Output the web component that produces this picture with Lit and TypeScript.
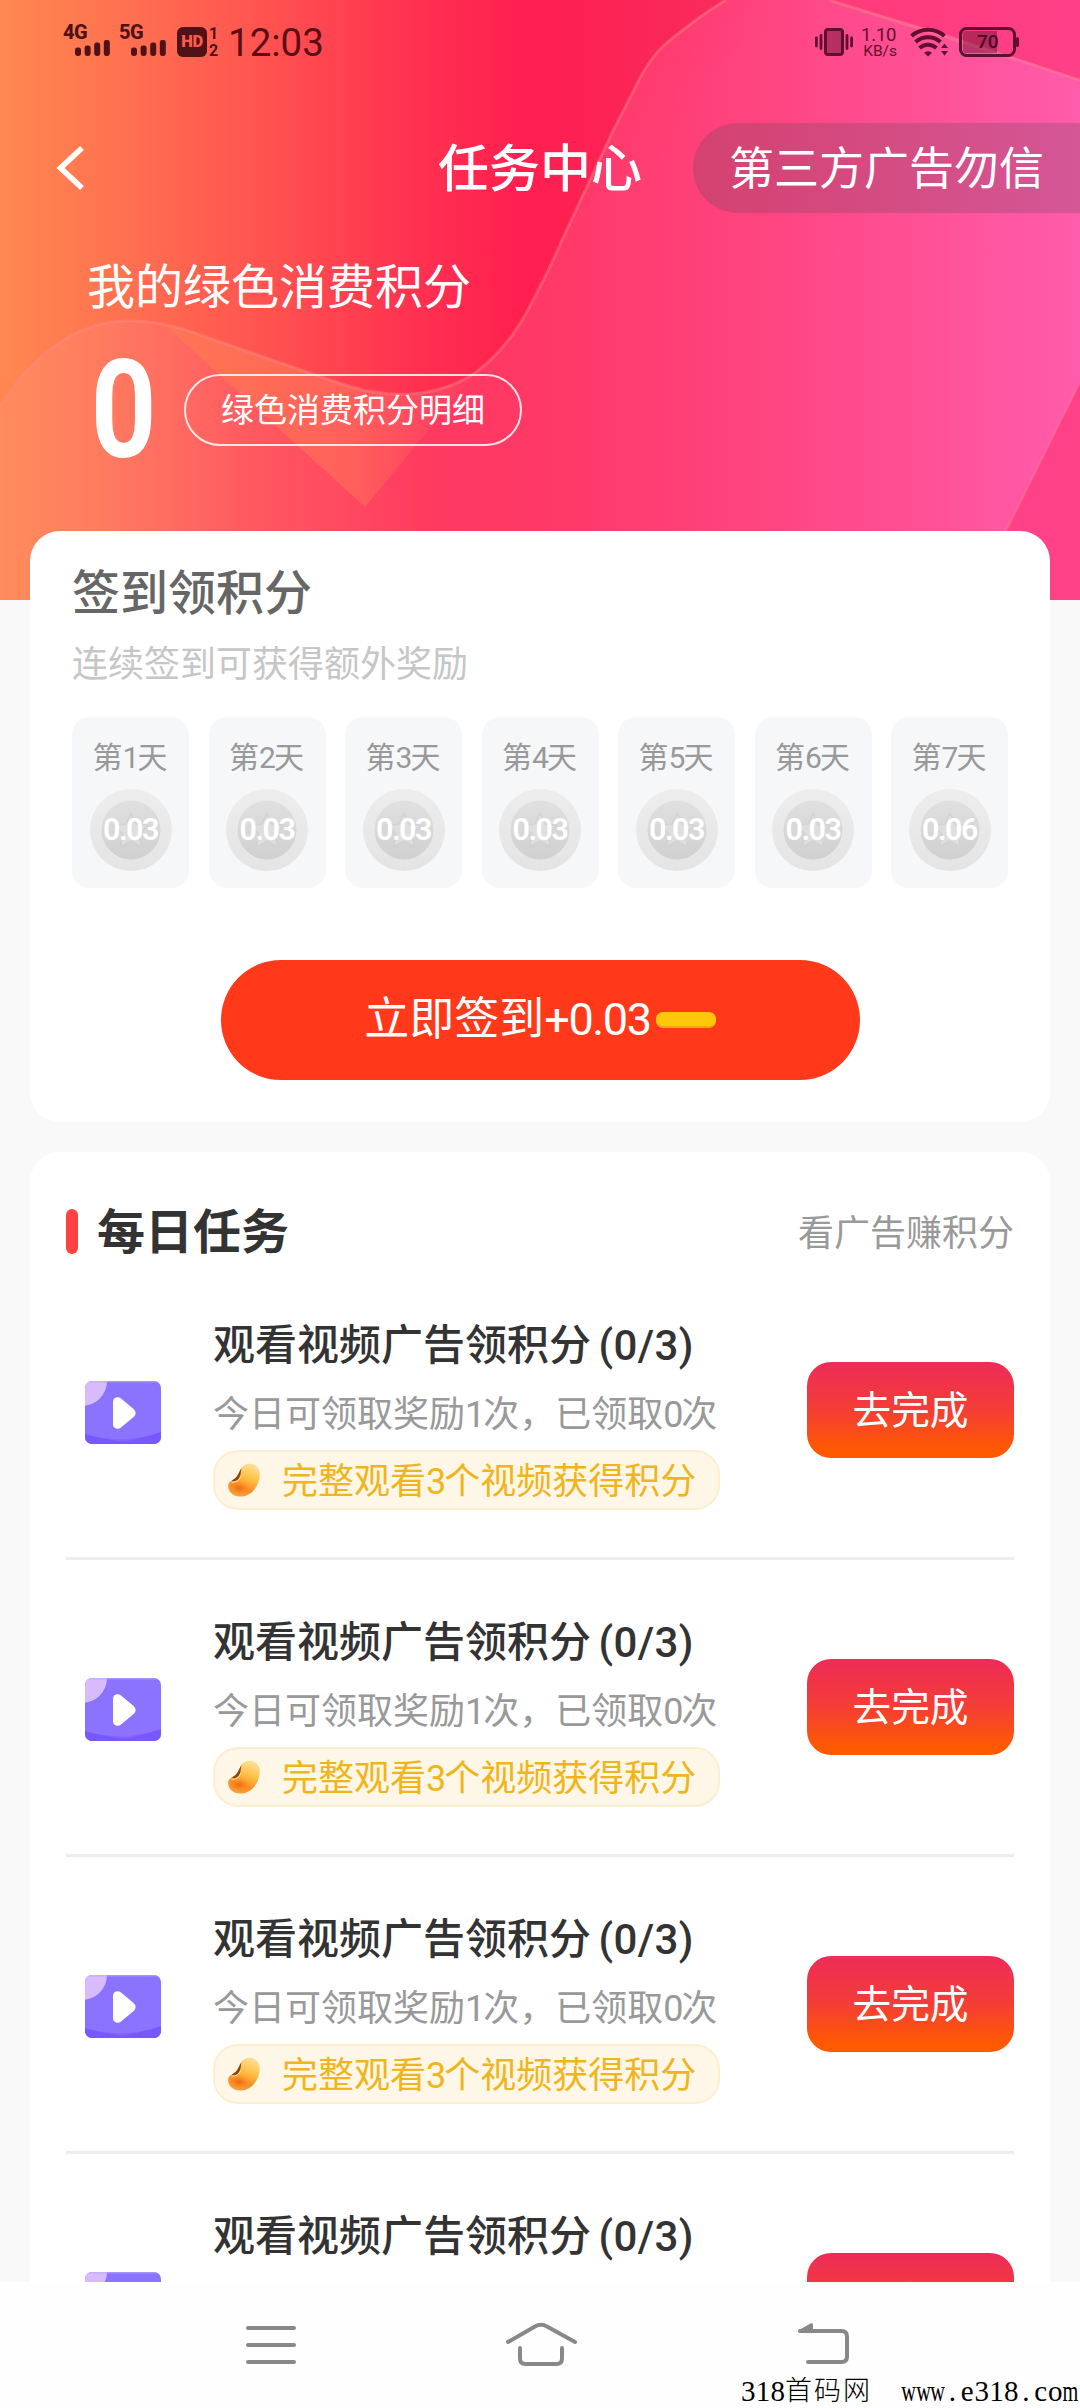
import { LitElement, html, css, svg } from "lit";
import { customElement, property } from "lit/decorators.js";

/** Wraps latin digits in a slightly tightened run so they sit well beside CJK text. */
const mixed = (text: string) =>
  text.split(/([0-9+.()/]+)/).map((part, i) => (i % 2 ? html`<span class="num">${part}</span>` : part));

const shared = css`
  * { box-sizing: border-box; }
  .num { letter-spacing: -0.058em; }
  svg { display: block; overflow: visible; }
`;

@customElement("status-bar")
class StatusBar extends LitElement {
  static styles = [shared, css`
    :host { display: flex; justify-content: space-between; align-items: center; height: 84px; padding: 0 60px 0 63px; color: #4f1217; position: relative; }
    .left, .right { display: flex; align-items: center; }
    .signal { display: flex; flex-direction: column; width: 48px; height: 44px; margin-right: 8px; font-size: 20px; line-height: 24px; font-weight: 800; letter-spacing: -0.6px; white-space: nowrap; }
    .bars { margin: -7px 0 0 12px; }
    .hd { display: flex; align-items: center; width: 44px; height: 36px; margin-left: 2px; }
    .badge { width: 30px; height: 30px; border-radius: 6px; background: currentColor; display: flex; align-items: center; justify-content: center; }
    .badge span { color: #ff5a50; font-size: 16.5px; line-height: 22px; font-weight: 900; letter-spacing: -0.5px; }
    .sims { display: flex; flex-direction: column; align-items: center; margin-left: 2px; font-size: 16px; line-height: 17px; font-weight: 700; }
    .clock { font-size: 38.5px; line-height: 46px; margin-left: 7px; margin-top: 2px; letter-spacing: 0; color: #5a0f16; }
    .speed { width: 36px; margin: 0 13px 0 8px; }
    .speed .value { display: block; font-size: 18.5px; line-height: 20px; letter-spacing: -0.2px; }
    .speed .unit { display: block; font-size: 15.5px; line-height: 17px; text-align: right; margin-top: -2px; }
    .right { color: #60102f; }
    .battery { display: grid; margin-left: 11px; width: 61px; height: 32px; }
    .battery > * { grid-area: 1 / 1; }
    .battery .level { font-size: 19px; font-weight: 500; line-height: 32px; padding-left: 18px; color: #4a0c28; }
  `];

  private signal(label: string) {
    return html`<div class="signal"><span>${label}</span>
      <svg class="bars" width="36" height="21" viewBox="0 0 36 21">
        ${[8.5, 10.5, 13.5, 16].map((h, i) => svg`<rect x=${i * 9.6} y=${19 - h} width="6" height=${h} rx="2.4" fill="currentColor"/>`)}
      </svg></div>`;
  }

  render() {
    return html`
      <div class="left">
        ${this.signal("4G")}${this.signal("5G")}
        <div class="hd">
          <div class="badge"><span>HD</span></div>
          <div class="sims"><span>1</span><span>2</span></div>
        </div>
        <span class="clock">12:03</span>
      </div>
      <div class="right">
        <svg width="38" height="32" viewBox="0 0 38 32">
          <rect x="10.5" y="3.5" width="17" height="25" rx="2.5" fill="#60102f" fill-opacity=".45" stroke="currentColor" stroke-width="3"/>
          <path d="M1.4 12v8M6 9.500v13M32 9.500v13M36.600 12v8" stroke="currentColor" stroke-width="2.8" stroke-linecap="round"/>
        </svg>
        <div class="speed"><span class="value">1.10</span><span class="unit">KB/s</span></div>
        <svg width="38" height="32" viewBox="0 0 38 32">
          <g fill="none" stroke="currentColor" stroke-width="4">
            <path d="M1.500 10a25 25 0 0 1 33 0"/>
            <path d="M5.500 16a18.500 18.500 0 0 1 25 0"/>
            <path d="M9.500 22a12.500 12.500 0 0 1 17 0"/>
          </g>
          <path d="M14 26.700q4-3 8 0L18 30.500z" fill="currentColor"/>
          <path d="M31 22l3.500-4.500L38 22zM31 25h7l-3.500 4.800z" fill="currentColor"/>
        </svg>
        <div class="battery">
          <svg width="61" height="32" viewBox="0 0 61 32">
            <rect x="1.500" y="2.500" width="54" height="27" rx="6" fill="none" stroke="currentColor" stroke-width="3"/>
            <path d="M7 5h31v22H7a3 3 0 0 1-3-3V8a3 3 0 0 1 3-3z" fill="currentColor" fill-opacity=".45"/>
            <path d="M58.500 12.500v7" stroke="currentColor" stroke-width="3" stroke-linecap="round"/>
          </svg>
          <span class="level">70</span>
        </div>
      </div>`;
  }
}

@customElement("hero-art")
class HeroArt extends LitElement {
  static styles = [shared, css`:host { display: block; } svg { overflow: hidden; }`];
  render() {
    const wave = "M0 406C40 345 85 321 128 321C155 321 180 327 203 336L275 361L345 385C395 401 440 396 475 373C498 356 515 335 530 306C546 276 552 264 562 240L612 133L640 78C652 56 662 46 674 37C690 24 706 12 726 0";
    return html`<svg width="1080" height="600" viewBox="0 0 1080 600">
      <defs>
        <linearGradient id="base" x1="0" x2="1">
          <stop offset="0" stop-color="#ff8850"/><stop offset=".1" stop-color="#ff7450"/>
          <stop offset=".24" stop-color="#ff5450"/><stop offset=".38" stop-color="#ff3250"/>
          <stop offset=".49" stop-color="#ff1e50"/><stop offset=".62" stop-color="#f92858"/><stop offset="1" stop-color="#ff3c85"/>
        </linearGradient>
        <linearGradient id="front" x1="0" x2="1">
          <stop offset="0" stop-color="#ff8c5c"/><stop offset=".1" stop-color="#ff7a60"/>
          <stop offset=".24" stop-color="#ff5860"/><stop offset=".4" stop-color="#ff3a60"/>
          <stop offset=".5" stop-color="#ff3866"/><stop offset=".7" stop-color="#ff4480"/>
          <stop offset="1" stop-color="#ff5cab"/>
        </linearGradient>
        <linearGradient id="corner" x1="0" x2="1">
          <stop offset="0" stop-color="#ff3a78"/><stop offset="1" stop-color="#ff4088"/>
        </linearGradient>
        <linearGradient id="shade" gradientUnits="userSpaceOnUse" x1="610" y1="90" x2="680" y2="145">
          <stop offset="0" stop-color="#ff3060" stop-opacity=".35"/><stop offset="1" stop-color="#ff3a6a" stop-opacity="0"/>
        </linearGradient>
        <linearGradient id="fold" gradientUnits="userSpaceOnUse" x1="165" y1="0" x2="475" y2="0">
          <stop offset="0" stop-color="#ff7850" stop-opacity=".85"/><stop offset=".6" stop-color="#ff6a58" stop-opacity=".7"/><stop offset="1" stop-color="#ff5060" stop-opacity=".15"/>
        </linearGradient>
      </defs>
      <rect width="1080" height="600" fill="url(#base)"/>
      <path d="${wave}H1080V600H0z" fill="url(#front)"/>
      <path d="M726 0L800 0L592 240L530 306C546 276 552 264 562 240L640 78C660 40 690 24 726 0z" fill="url(#shade)"/>
      <path d="M165 325C180 328 192 331 203 336L275 361L345 385C395 401 440 396 475 373L365 507z" fill="url(#fold)"/>
      <path d="M829 0H1080V80L940 32z" fill="url(#corner)"/>
      <path d="M1080 382L1004 535V600H1080z" fill="#ff4188"/>
      <g fill="none" stroke="#ff8c8c" stroke-opacity=".4" stroke-width="3">
        <path d="${wave}"/><path d="M829 0L940 35L1080 80"/><path d="M1080 382L1004 535" stroke-opacity=".25"/>
      </g>
    </svg>`;
  }
}

@customElement("day-card")
class DayCard extends LitElement {
  @property({ type: Number }) day = 1;
  @property() points = "";
  static styles = [shared, css`
    :host { display: flex; flex-direction: column; align-items: center; height: 171px; padding-top: 22px; border-radius: 18px; background: #f6f7f9; }
    .label { font-size: 30px; line-height: 38px; color: #999; margin-right: 1px; }
    .coin { display: grid; place-items: center; width: 82px; height: 82px; margin-top: 12px; }
    .coin > * { grid-area: 1 / 1; }
    .points { font-size: 30.5px; font-weight: 600; line-height: 38px; color: #fff; }
    .points .num { letter-spacing: -0.05em; }
  `];
  render() {
    return html`
      <span class="label">${mixed(`第${this.day}天`)}</span>
      <div class="coin">
        <svg width="82" height="82" viewBox="0 0 82 82">
          <defs>
            <linearGradient id="o" x2="0" y2="1"><stop stop-color="#ededed"/><stop offset="1" stop-color="#e4e4e4"/></linearGradient>
            <linearGradient id="i" x2="0" y2="1"><stop stop-color="#e0e0e0"/><stop offset="1" stop-color="#d0d0d0"/></linearGradient>
          </defs>
          <circle cx="41" cy="41" r="41" fill="url(#o)"/>
          <circle cx="41" cy="41" r="29.500" fill="url(#i)"/>
          <path d="M41 24l5 11 12 1.500-9 8.500 2.500 13L41 52l-10.500 6L33 45l-9-8.500L36 35z" fill="#dedede" stroke="#d2d2d2" stroke-width="1.500" stroke-linejoin="round"/>
        </svg>
        <span class="points">${mixed(this.points)}</span>
      </div>`;
  }
}

@customElement("task-row")
class TaskRow extends LitElement {
  @property() heading = "";
  @property() note = "";
  @property() reward = "";
  @property() action = "";
  static styles = [shared, css`
    :host { display: flex; height: 297px; padding: 60px 0 0 19px; border-bottom: 3px solid #ededed; }
    .thumb { width: 76px; height: 63px; margin-top: 58px; flex: none; overflow: hidden; }
    .body { margin-left: 52px; flex: 1; display: flex; flex-direction: column; align-items: flex-start; }
    .heading { font-size: 42px; line-height: 60px; font-weight: 500; color: #333; margin-top: -7px; white-space: pre; }
    .heading .num { letter-spacing: 0.01em; margin-left: -3px; }
    .note { font-size: 36px; line-height: 50px; color: #999; margin-top: 14px; white-space: nowrap; }
    .reward { display: flex; align-items: center; width: 507px; height: 60px; margin-top: 10px; padding-left: 12px; border: 2px solid #fdeed0; border-radius: 25px; background: #fef6e6; font-size: 36px; line-height: 56px; color: #f0b51c; white-space: nowrap; }
    .reward svg { margin-right: 21px; }
    .reward .words { margin-top: 3px; }
    .action { width: 207px; height: 96px; margin-top: 39px; flex: none; border-radius: 24px; background: linear-gradient(#ed2c58, #f43c38 48%, #ff5a00 92%); color: #fff; font-size: 38.7px; line-height: 96px; text-align: center; padding-top: 1px; }
  `];
  render() {
    return html`
      <svg class="thumb" viewBox="0 0 76 63">
        <defs><clipPath id="c"><rect width="76" height="63" rx="7"/></clipPath></defs>
        <g clip-path="url(#c)">
          <rect width="76" height="63" fill="#8b73ff"/>
          <path d="M0 53Q38 65 76 51V63H0z" fill="#7857ff"/>
          <path d="M19 57Q38 60 57 56Q38 64 19 57z" fill="#8b64ff"/>
          <circle cx="-3" cy="0" r="25" fill="#d7bbfc"/>
          <rect width="76" height="1.500" fill="#b9a9ff" opacity=".6"/>
        </g>
        <path d="M28 20.500C28 16.500 33 15 36 17.500L48 27.500C51.500 30.500 51.500 33.500 48 36.500L36 46.500C33 49 28 47.500 28 43.500z" fill="#fff"/>
      </svg>
      <div class="body">
        <span class="heading">${mixed(this.heading)}</span>
        <span class="note">${mixed(this.note)}</span>
        <div class="reward">
          <svg width="34" height="36" viewBox="0 0 34 36">
            <defs>
              <linearGradient id="b" x1=".7" y1="0" x2=".35" y2="1">
                <stop stop-color="#ffe098"/><stop offset=".4" stop-color="#ffc046"/><stop offset=".75" stop-color="#f98e24"/><stop offset="1" stop-color="#f5a23c"/>
              </linearGradient>
              <radialGradient id="g"><stop stop-color="#ee5f10" stop-opacity=".8"/><stop offset="1" stop-color="#f47a1a" stop-opacity="0"/></radialGradient>
            </defs>
            <path d="M14 6.500C18-.5 31 0 32.500 10C34 20 27 33 15 34.500C7 35.500 1 30 1.200 24C1.300 18.500 6 19 10 14.500C12.500 11.500 12.500 9 14 6.500z" fill="url(#b)"/>
            <ellipse cx="12" cy="26" rx="10" ry="7" fill="url(#g)"/>
            <path d="M14.500 6C12 9.500 11 13.500 8.500 16C7 17.500 5 18 4.500 19.500C8.500 20 12 17.500 13 14C14 11 13.800 9 14.500 6z" fill="#8c4510"/>
            <path d="M4.500 20C8.500 20.500 12.500 18.500 13.500 14.500" fill="none" stroke="#fff0c0" stroke-width="1"/>
          </svg>
          <span class="words">${mixed(this.reward)}</span>
        </div>
      </div>
      <div class="action">${this.action}</div>`;
  }
}

@customElement("app-root")
class AppRoot extends LitElement {
  static styles = [shared, css`
    :host { display: flex; flex-direction: column; position: relative; width: 1080px; height: 2408px; overflow: hidden; background: #f9f9f9; font-family: Roboto, "Noto Sans CJK SC", sans-serif; }
    .page { flex: 1; min-height: 0; overflow: hidden; position: relative; }
    .art { position: absolute; top: 0; left: 0; }
    .hero { position: relative; height: 531px; color: #fff; }
    .topbar { display: grid; grid-template-columns: 1fr auto 1fr; align-items: center; height: 168px; }
    .back { margin-left: 56px; }
    .title { font-size: 51px; font-weight: 500; line-height: 70px; margin-top: 3px; }
    .notice { justify-self: end; width: 387px; height: 90px; border-radius: 45px 0 0 45px; background: rgba(82, 72, 88, .25); font-size: 45px; line-height: 93px; padding-left: 36px; white-space: nowrap; }
    .balance-label { font-size: 48px; line-height: 72px; padding-left: 87px; }
    .balance { display: flex; align-items: center; height: 72px; margin-top: 50px; padding-left: 87px; }
    .zero { width: 74px; display: flex; justify-content: center; margin-right: 23px; font-size: 138px; font-weight: 700; line-height: 164px; }
    .zero span { transform: scaleX(.83); }
    .detail { width: 338px; height: 72px; border: 2px solid rgba(255, 255, 255, .85); border-radius: 36px; font-size: 33px; line-height: 70px; text-align: center; }
    .card { position: relative; width: 1020px; margin: 0 auto; background: #fff; border-radius: 30px; }
    .checkin { height: 591px; padding: 29px 42px 0; }
    .checkin h2 { margin: 0; font-size: 48px; font-weight: 500; line-height: 68px; color: #666; }
    .checkin p { margin: 10px 0 0; font-size: 36px; line-height: 54px; color: #c6c6c6; }
    .days { display: grid; grid-template-columns: repeat(7, 117px); justify-content: space-between; margin-top: 25px; }
    .sign { display: flex; align-items: center; justify-content: center; width: 639px; height: 120px; margin: 72px auto 0; border-radius: 60px; background: #ff391a; color: #fff; font-size: 45px; line-height: 60px; }
    .sign .num { letter-spacing: -0.03em; }
    .dash { width: 60px; height: 16px; margin-left: 5px; border-radius: 7px; background: #fdc80c; border-bottom: 2px solid #eda90c; }
    .tasks { margin-top: 30px; padding: 48px 36px 0; border-radius: 30px 30px 0 0; }
    .tasks-head { display: flex; align-items: center; height: 63px; }
    .mark { width: 12px; height: 45px; border-radius: 6px; background: #ff4242; }
    .tasks-head h2 { margin: 2px 0 0 19px; font-size: 48px; font-weight: 700; line-height: 62px; color: #333; flex: 1; }
    .tasks-head span { font-size: 36px; line-height: 50px; color: #999; margin-top: 4px; }
    .sysnav { flex: none; height: 126px; background: #fefefe; display: flex; align-items: flex-start; padding: 38px 0 0 244px; }
    .home { margin: 0 218px 0 206px; }
    .watermark { position: absolute; left: 741px; top: 2374px; display: flex; align-items: center; font-family: "Liberation Serif", "Noto Sans CJK SC", serif; font-size: 29px; line-height: 34px; color: #000; }
    .half { display: flex; justify-content: center; width: 14.700px; }
    .half.wide span { transform: scaleX(.7); }
    .full { width: 29px; font-size: 27px; font-weight: 300; }
  `];

  private days = ["0.03", "0.03", "0.03", "0.03", "0.03", "0.03", "0.06"];

  private cell(ch: string) {
    const full = ch.charCodeAt(0) > 255;
    return html`<span class=${full ? "full" : /[wm]/.test(ch) ? "half wide" : "half"}><span>${ch}</span></span>`;
  }

  render() {
    return html`
      <div class="page">
        <hero-art class="art"></hero-art>
        <div class="hero">
          <status-bar></status-bar>
          <div class="topbar">
            <svg class="back" width="30" height="46" viewBox="0 0 30 46"><path d="M26 3L4.500 23L26 43" fill="none" stroke="#fff" stroke-width="5.500"/></svg>
            <div class="title">任务中心</div>
            <div class="notice">第三方广告勿信</div>
          </div>
          <div class="balance-label">我的绿色消费积分</div>
          <div class="balance">
            <div class="zero"><span>0</span></div>
            <div class="detail">绿色消费积分明细</div>
          </div>
        </div>
        <section class="card checkin">
          <h2>签到领积分</h2>
          <p>连续签到可获得额外奖励</p>
          <div class="days">
            ${this.days.map((p, i) => html`<day-card .day=${i + 1} .points=${p}></day-card>`)}
          </div>
          <div class="sign"><span>${mixed("立即签到+0.03")}</span><i class="dash"></i></div>
        </section>
        <section class="card tasks">
          <div class="tasks-head"><i class="mark"></i><h2>每日任务</h2><span>看广告赚积分</span></div>
          ${[1, 2, 3].map(() => this.task())}
          ${this.task()}
        </section>
      </div>
      <nav class="sysnav">
        <svg width="54" height="48" viewBox="0 0 54 48"><path d="M4 8H50M4 25H50M4 42H50" stroke="#888" stroke-width="4" stroke-linecap="round"/></svg>
        <svg class="home" width="74" height="48" viewBox="0 0 74 48"><g fill="none" stroke="#888" stroke-width="4" stroke-linecap="round" stroke-linejoin="round"><path d="M4 22L31 6.500Q37 3 43 6.500L71 22"/><path d="M16 28V38.500Q16 44 21.500 44H52.500Q58 44 58 38.500V28"/></g></svg>
        <svg width="54" height="48" viewBox="0 0 54 48"><path d="M12 42H45.500Q51 42 51 36.500V16.500Q51 11 45.500 11H4" fill="none" stroke="#888" stroke-width="4" stroke-linecap="round"/><path d="M2 10.500L15.500 3Q17 3 17 5V12H3z" fill="#888"/></svg>
      </nav>
      <div class="watermark">${[..."318首码网　www.e318.com"].map((c) => this.cell(c))}</div>`;
  }

  private task() {
    return html`<task-row
      .heading=${"观看视频广告领积分 (0/3)"}
      .note=${"今日可领取奖励1次，已领取0次"}
      .reward=${"完整观看3个视频获得积分"}
      .action=${"去完成"}></task-row>`;
  }
}
